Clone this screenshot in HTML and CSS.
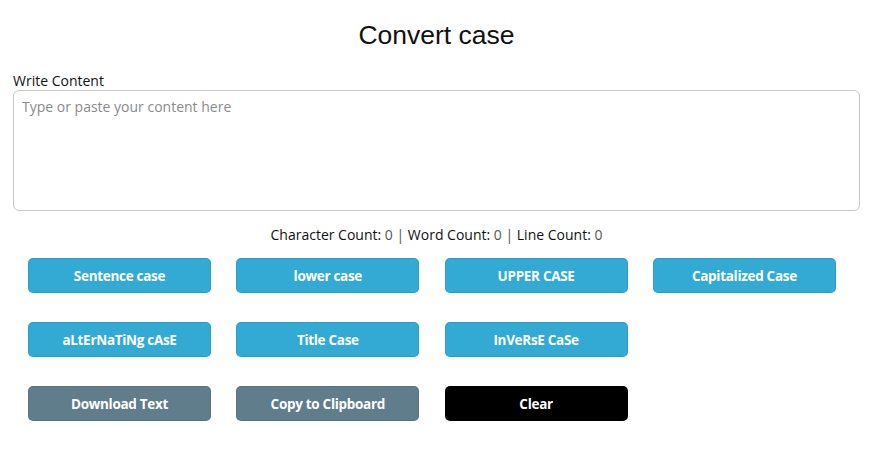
FILE: index.html
```html
<!DOCTYPE html>
<html lang="en">
<head>
<meta charset="utf-8">
<title>Convert case</title>
<link rel="stylesheet" href="styles.css">
</head>
<body>
<main class="page">
  <h1 class="title">Convert case</h1>
  <label class="field-label" for="content">Write Content</label>
  <textarea id="content" class="content" placeholder="Type or paste your content here"></textarea>
  <p class="counts">Character Count: <span class="num">0 |</span> Word Count: <span class="num">0 |</span> Line Count: <span class="num">0</span></p>
  <div class="buttons">
    <button class="btn btn-blue">Sentence case</button>
    <button class="btn btn-blue">lower case</button>
    <button class="btn btn-blue">UPPER CASE</button>
    <button class="btn btn-blue">Capitalized Case</button>
    <button class="btn btn-blue">aLtErNaTiNg cAsE</button>
    <button class="btn btn-blue">Title Case</button>
    <button class="btn btn-blue">InVeRsE CaSe</button>
    <span class="spacer"></span>
    <button class="btn btn-gray">Download Text</button>
    <button class="btn btn-gray">Copy to Clipboard</button>
    <button class="btn btn-black">Clear</button>
  </div>
</main>
</body>
</html>
```

FILE: styles.css
```css
* { box-sizing: border-box; }
html, body { margin: 0; padding: 0; background: #fff; }
body {
  font-family: "Open Sans", "Noto Sans", sans-serif;
  font-size: 14px;
  color: #212121;
}
.page {
  padding: 0 14px 0 13px;
}
.title {
  margin: 20px 0 21px;
  font-family: "Liberation Sans", Arial, sans-serif;
  font-weight: normal;
  font-size: 26.5px;
  line-height: 30px;
  text-align: center;
  color: #111;
}
.field-label {
  display: block;
  line-height: 19px;
  margin-bottom: 0;
  color: #111;
}
.content {
  display: block;
  width: 100%;
  height: 121px;
  margin: 0;
  padding: 6px 8px;
  border: 1px solid #c8c8c8;
  border-radius: 6px;
  font-family: "Open Sans", "Noto Sans", sans-serif;
  font-size: 14px;
  line-height: 20px;
  resize: none;
  outline: none;
}
.content::placeholder { color: #8a8a8a; }
.counts {
  margin: 14px 0 0;
  line-height: 20px;
  text-align: center;
  color: #111;
}
.counts .num { color: #555; }
.buttons {
  display: grid;
  grid-template-columns: repeat(4, 183px);
  column-gap: 25.3px;
  row-gap: 29px;
  padding-left: 15px;
  margin-top: 13px;
}
.btn {
  height: 35px;
  border-radius: 5px;
  border: 1px solid rgba(0,0,0,0.08);
  font-family: "Open Sans", "Noto Sans", sans-serif;
  font-weight: 700;
  font-size: 13.5px;
  letter-spacing: -0.3px;
  color: #fff;
  padding: 0;
}
.btn-blue { background: #33aad3; }
.btn-gray { background: #607d8b; }
.btn-black { background: #000; }
```
